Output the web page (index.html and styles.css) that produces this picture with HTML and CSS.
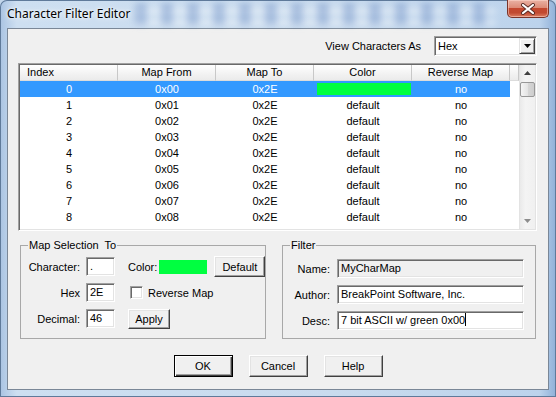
FILE: index.html
```html
<!DOCTYPE html>
<html lang="en">
<head>
    <meta charset="UTF-8">
    <meta name="viewport" content="width=device-width, initial-scale=1.0">
    <link rel="stylesheet" href="styles.css">
    <title>Character Filter Editor</title>
</head>
<body>

<div class="window">
    <div class="titlebar">
        <span class="title">Character Filter Editor</span>
        <div class="close">
            <svg width="16" height="12" viewBox="0 0 16 12">
                <path d="M3 2 L13 10 M13 2 L3 10" stroke="#5a2c26" stroke-width="4" stroke-linecap="round"/>
                <path d="M3 2 L13 10 M13 2 L3 10" stroke="#fff" stroke-width="2.2" stroke-linecap="round"/>
            </svg>
        </div>
    </div>

    <div class="client">
        <div class="view-row">
            <span>View Characters As</span>
            <div class="combo">
                <span class="combo-text">Hex</span>
                <span class="combo-btn">
                    <svg width="7" height="4" viewBox="0 0 7 4"><path d="M0 0 H7 L3.5 4 Z" fill="#000"/></svg>
                </span>
            </div>
        </div>

        <div class="listview">
            <div class="list-area">
                <div class="list-head">
                    <div class="hcell left">Index</div>
                    <div class="hcell">Map From</div>
                    <div class="hcell">Map To</div>
                    <div class="hcell">Color</div>
                    <div class="hcell">Reverse Map</div>
                    <div class="hcell filler"></div>
                </div>
                <div class="row selected">
                    <div>0</div><div>0x00</div><div>0x2E</div><div><div class="swatch"></div></div><div>no</div>
                </div>
                <div class="row"><div>1</div><div>0x01</div><div>0x2E</div><div>default</div><div>no</div></div>
                <div class="row"><div>2</div><div>0x02</div><div>0x2E</div><div>default</div><div>no</div></div>
                <div class="row"><div>3</div><div>0x03</div><div>0x2E</div><div>default</div><div>no</div></div>
                <div class="row"><div>4</div><div>0x04</div><div>0x2E</div><div>default</div><div>no</div></div>
                <div class="row"><div>5</div><div>0x05</div><div>0x2E</div><div>default</div><div>no</div></div>
                <div class="row"><div>6</div><div>0x06</div><div>0x2E</div><div>default</div><div>no</div></div>
                <div class="row"><div>7</div><div>0x07</div><div>0x2E</div><div>default</div><div>no</div></div>
                <div class="row"><div>8</div><div>0x08</div><div>0x2E</div><div>default</div><div>no</div></div>
                <div class="row"><div>9</div><div>0x09</div><div>0x2E</div><div>default</div><div>no</div></div>
            </div>
            <div class="vscroll">
                <div class="sb-arrow">
                    <svg width="7" height="4" viewBox="0 0 7 4"><path d="M0 4 H7 L3.5 0 Z" fill="#404040"/></svg>
                </div>
                <div class="sb-thumb"></div>
                <div class="sb-track"></div>
                <div class="sb-arrow">
                    <svg width="7" height="4" viewBox="0 0 7 4"><path d="M0 0 H7 L3.5 4 Z" fill="#8c8c8c"/></svg>
                </div>
            </div>
        </div>

        <div class="groups">
            <fieldset class="group map-group">
                <legend>Map Selection&nbsp; To</legend>
                <div class="map-grid">
                    <label>Character:</label>
                    <div class="field small">.</div>
                    <div class="extra">
                        <span>Color:</span>
                        <div class="color-box"></div>
                        <div class="btn default-btn">Default</div>
                    </div>

                    <label>Hex</label>
                    <div class="field small">2E</div>
                    <div class="extra">
                        <div class="checkbox"></div>
                        <span class="check-label">Reverse Map</span>
                    </div>

                    <label>Decimal:</label>
                    <div class="field small">46</div>
                    <div class="extra">
                        <div class="btn apply-btn">Apply</div>
                    </div>
                </div>
            </fieldset>

            <fieldset class="group filter-group">
                <legend>Filter</legend>
                <div class="filter-grid">
                    <label>Name:</label>
                    <div class="field disabled">MyCharMap</div>
                    <label>Author:</label>
                    <div class="field">BreakPoint Software, Inc.</div>
                    <label>Desc:</label>
                    <div class="field">7 bit ASCII w/ green 0x00<span class="caret"></span></div>
                </div>
            </fieldset>
        </div>

        <div class="buttons">
            <div class="btn dlg-btn ok">OK</div>
            <div class="btn dlg-btn">Cancel</div>
            <div class="btn dlg-btn">Help</div>
        </div>
    </div>
</div>

</body>
</html>
```

FILE: styles.css
```css
* {
    box-sizing: border-box;
}

body {
    margin: 0;
    width: 556px;
    height: 397px;
    overflow: hidden;
    font-family: 'Liberation Sans', Arial, sans-serif;
    font-size: 11px;
    color: #000;
    background-color: #c3d6ea;
}

/* window frame */

.window {
    width: 556px;
    height: 397px;
    display: flex;
    flex-direction: column;
    border-radius: 7px 7px 0 0;
    overflow: hidden;
    background: linear-gradient(90deg, #a9c3e2 0%, #cddff1 3%, #c9dbee 60%, #bcd3ec 97%, #8fb0d8 100%);
    box-shadow: inset 0 0 0 1px #5f7a9a;
}

.titlebar {
    position: relative;
    height: 28px;
    display: flex;
    align-items: flex-start;
    flex-shrink: 0;
}

.titlebar::before {
    content: '';
    position: absolute;
    left: 135px;
    right: 60px;
    top: 3px;
    height: 22px;
    background:
        repeating-linear-gradient(90deg, rgba(70, 110, 180, 0.3) 0 12px, transparent 12px 26px),
        repeating-linear-gradient(0deg, rgba(255, 255, 255, 0.45) 0 5px, transparent 5px 11px);
    filter: blur(3px);
}

.title {
    position: relative;
    margin: 5px 0 0 7px;
    font-family: 'Noto Sans', 'Liberation Sans', sans-serif;
    font-size: 12px;
    line-height: 18px;
    text-shadow: 0 0 6px #fff, 0 0 3px #fff;
}

.close {
    position: relative;
    margin: 0 7px 0 auto;
    width: 42px;
    height: 18px;
    border: 1px solid #7a3429;
    border-top: none;
    border-radius: 0 0 5px 5px;
    background: linear-gradient(#eab2a4 0%, #dd8c78 45%, #c4482f 50%, #c14a31 75%, #dc7e62 100%);
    box-shadow: inset 0 0 0 1px rgba(255, 220, 210, 0.5);
    display: flex;
    align-items: center;
    justify-content: center;
}

.client {
    margin: 0 7px;
    height: 362px;
    border: 1px solid #7a8797;
    background-color: #f0f0f0;
    display: flex;
    flex-direction: column;
}

/* sunken controls */

.combo,
.listview,
.field,
.checkbox {
    border: 1px solid;
    border-color: #a0a0a0 #fff #fff #a0a0a0;
    box-shadow: inset 1px 1px 0 #696969, inset -1px -1px 0 #e3e3e3;
    background-color: #fff;
}

.view-row {
    display: flex;
    justify-content: flex-end;
    align-items: center;
    gap: 13px;
    padding: 7px 11px 0 0;
}

.combo {
    width: 103px;
    height: 20px;
    padding: 1px;
    display: flex;
}

.combo-text {
    flex: 1;
    padding-left: 2px;
    line-height: 16px;
}

.combo-btn {
    width: 16px;
    height: 16px;
    background-color: #f0f0f0;
    border: 1px solid;
    border-color: #e3e3e3 #404040 #404040 #e3e3e3;
    box-shadow: inset 1px 1px 0 #fff, inset -1px -1px 0 #a0a0a0;
    display: flex;
    align-items: center;
    justify-content: center;
}

/* list view */

.listview {
    margin: 7px 11px 0 10px;
    height: 168px;
    padding: 1px;
    display: flex;
    flex-shrink: 0;
}

.list-area {
    width: 499px;
    overflow: hidden;
    background-color: #fff;
}

.list-head {
    display: grid;
    grid-template-columns: repeat(5, 98px) 9px;
    height: 16px;
}

.hcell {
    background: linear-gradient(#fff, #f2f2f2 60%, #ebebeb);
    border-right: 1px solid #c8c8c8;
    border-bottom: 1px solid #dcdcdc;
    text-align: center;
    line-height: 15px;
}

.hcell.left {
    text-align: left;
    padding-left: 7px;
}

.row {
    display: grid;
    grid-template-columns: repeat(5, 98px);
    width: 490px;
    height: 16px;
    line-height: 16px;
    text-align: center;
}

.row.selected {
    background-color: #3399ff;
    color: #fff;
}

.swatch {
    height: 12px;
    margin: 2px 1px 2px 3px;
    background-color: #00ff40;
}

.vscroll {
    width: 16px;
    display: flex;
    flex-direction: column;
    background: linear-gradient(90deg, #e8e8e8, #f4f4f4 40%, #f0f0f0);
    box-shadow: inset 1px 0 0 #e3e3e3;
}

.sb-arrow {
    height: 16px;
    display: flex;
    align-items: center;
    justify-content: center;
}

.sb-thumb {
    height: 15px;
    margin: 1px 0 0 1px;
    border: 1px solid #979797;
    border-radius: 2px;
    background: linear-gradient(90deg, #f5f5f5, #e4e4e4 50%, #d7d7d7 51%, #cdcdcd);
}

.sb-track {
    flex: 1;
}

/* group boxes */

.groups {
    display: flex;
    gap: 16px;
    margin: 8px 12px 0 12px;
}

.group {
    margin: 0;
    padding: 0;
    height: 100px;
    border: 1px solid #a8a8a8;
    min-width: 0;
}

.group legend {
    margin-left: 7px;
    padding: 0 1px;
    line-height: 13px;
}

.map-group {
    width: 246px;
}

.filter-group {
    width: 254px;
}

.map-grid {
    display: grid;
    grid-template-columns: 65px 42px 1fr;
    grid-auto-rows: 19px;
    row-gap: 7px;
    align-items: center;
    padding-top: 5px;
}

.filter-grid {
    display: grid;
    grid-template-columns: 54px 187px;
    grid-auto-rows: 19px;
    row-gap: 7px;
    align-items: center;
    padding-top: 7px;
}

label {
    text-align: right;
    padding-right: 6px;
}

.filter-grid label {
    padding-right: 7px;
}

.field {
    height: 19px;
    padding: 1px 3px;
    line-height: 15px;
    white-space: nowrap;
    overflow: hidden;
}

.field.small {
    width: 29px;
}

.field.disabled {
    background-color: #f0f0f0;
}

.caret {
    display: inline-block;
    width: 1px;
    height: 13px;
    background-color: #000;
    vertical-align: -2px;
}

.extra {
    display: flex;
    align-items: center;
}

.color-box {
    width: 48px;
    height: 14px;
    margin-left: 2px;
    background-color: #00ff40;
}

.checkbox {
    width: 13px;
    height: 13px;
    margin-left: 2px;
}

.check-label {
    margin-left: 5px;
}

/* buttons */

.btn {
    background-color: #f0f0f0;
    border: 1px solid;
    border-color: #fff #404040 #404040 #fff;
    box-shadow: inset -1px -1px 0 #a0a0a0, inset 1px 1px 0 #e3e3e3;
    display: flex;
    align-items: center;
    justify-content: center;
}

.default-btn {
    width: 51px;
    height: 21px;
    margin-left: 7px;
}

.apply-btn {
    width: 42px;
    height: 20px;
}

.buttons {
    display: flex;
    justify-content: center;
    gap: 16px;
    margin-top: 16px;
}

.dlg-btn {
    width: 59px;
    height: 22px;
}

.dlg-btn.ok {
    border-color: #000;
    box-shadow: inset 1px 1px 0 #fff, inset -1px -1px 0 #404040, inset -2px -2px 0 #a0a0a0;
}
```
